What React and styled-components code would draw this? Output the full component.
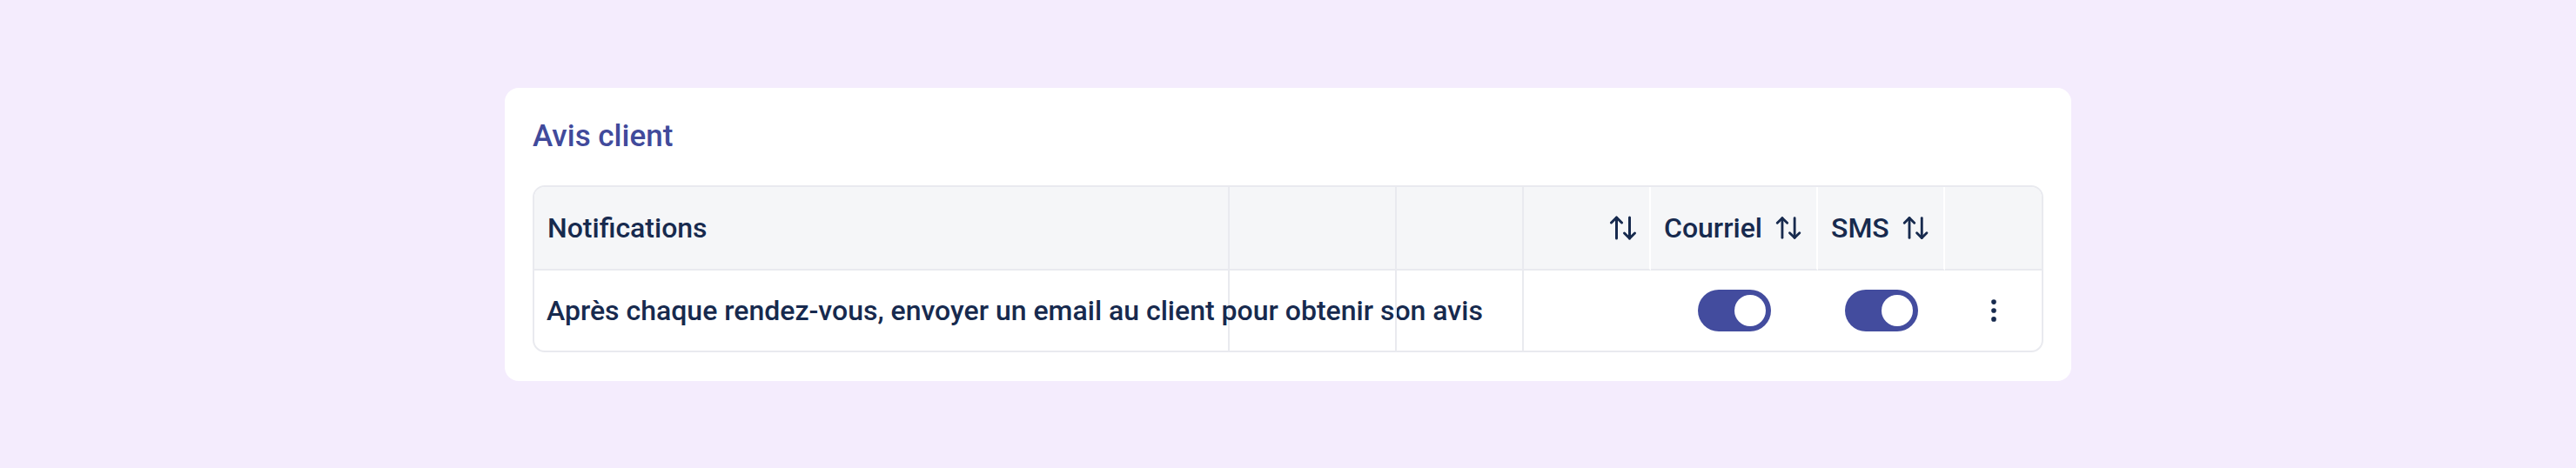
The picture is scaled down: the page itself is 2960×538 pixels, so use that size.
import React from "react";
import styled, { createGlobalStyle } from "styled-components";
import { ArrowUpDown, EllipsisVertical } from "lucide-react";

const GlobalStyle = createGlobalStyle`
  * { box-sizing: border-box; }
  html, body { margin: 0; padding: 0; }
  body {
    background: #f4ecfd;
    font-family: Roboto, "Liberation Sans", sans-serif;
    color: #172a4e;
  }
`;

const Page = styled.div`
  min-height: 538px;
  display: flex;
  align-items: center;
  justify-content: center;
`;

const Card = styled.section`
  width: 1800px;
  background: #ffffff;
  border-radius: 16px;
  padding: 36px 32px 33px;
  display: flex;
  flex-direction: column;
  gap: 36px;
`;

const Title = styled.h2`
  margin: 0;
  font-size: 35px;
  line-height: 40px;
  font-weight: 500;
  color: #414a9b;
`;

const Table = styled.div`
  display: grid;
  grid-template-columns: 799px 192px 146px 146px 192px 146px 1fr;
  border: 2px solid #e9eaef;
  border-radius: 14px;
  overflow: hidden;
`;

const HeadCell = styled.div`
  height: 96px;
  background: #f5f6f8;
  border-bottom: 2px solid #e9eaef;
  border-right: ${(p) => (p.$last ? "none" : `2px solid ${p.$light ? "#ffffff" : "#e9eaef"}`)};
  display: flex;
  align-items: center;
  justify-content: ${(p) => (p.$end ? "flex-end" : "flex-start")};
  gap: 13px;
  padding: 0 ${(p) => (p.$end ? "12px" : "15px")};
  font-size: 32px;
  font-weight: 500;
  color: #172a4e;
  white-space: nowrap;
`;

const BodyCell = styled.div`
  height: 92px;
  border-right: ${(p) => (p.$divider ? "2px solid #e9eaef" : "none")};
  display: flex;
  align-items: center;
  justify-content: ${(p) => (p.$center ? "center" : "flex-start")};
  padding: 0 14px;
  font-size: 32px;
  font-weight: 500;
  color: #172a4e;
  white-space: nowrap;
  overflow: visible;
  position: relative;
`;

const Switch = styled.button`
  width: 84px;
  height: 48px;
  border: none;
  border-radius: 24px;
  background: #434c9e;
  padding: 6px;
  display: flex;
  justify-content: flex-end;
  align-items: center;
  cursor: pointer;
`;

const Knob = styled.span`
  width: 36px;
  height: 36px;
  border-radius: 50%;
  background: #ffffff;
`;

const SortIcon = () => <ArrowUpDown size={36} strokeWidth={2} color="#172a4e" />;

export default function App() {
  return (
    <>
      <GlobalStyle />
      <Page>
        <Card>
          <Title>Avis client</Title>
          <Table>
            <HeadCell>Notifications</HeadCell>
            <HeadCell />
            <HeadCell />
            <HeadCell $light $end>
              <SortIcon />
            </HeadCell>
            <HeadCell $light>
              Courriel
              <SortIcon />
            </HeadCell>
            <HeadCell $light>
              SMS
              <SortIcon />
            </HeadCell>
            <HeadCell $last />

            <BodyCell $divider>
              Après chaque rendez-vous, envoyer un email au client pour obtenir son avis
            </BodyCell>
            <BodyCell $divider />
            <BodyCell $divider />
            <BodyCell />
            <BodyCell $center>
              <Switch aria-label="Courriel">
                <Knob />
              </Switch>
            </BodyCell>
            <BodyCell $center>
              <Switch aria-label="SMS">
                <Knob />
              </Switch>
            </BodyCell>
            <BodyCell $center>
              <EllipsisVertical size={34} strokeWidth={2} color="#172a4e" />
            </BodyCell>
          </Table>
        </Card>
      </Page>
    </>
  );
}
